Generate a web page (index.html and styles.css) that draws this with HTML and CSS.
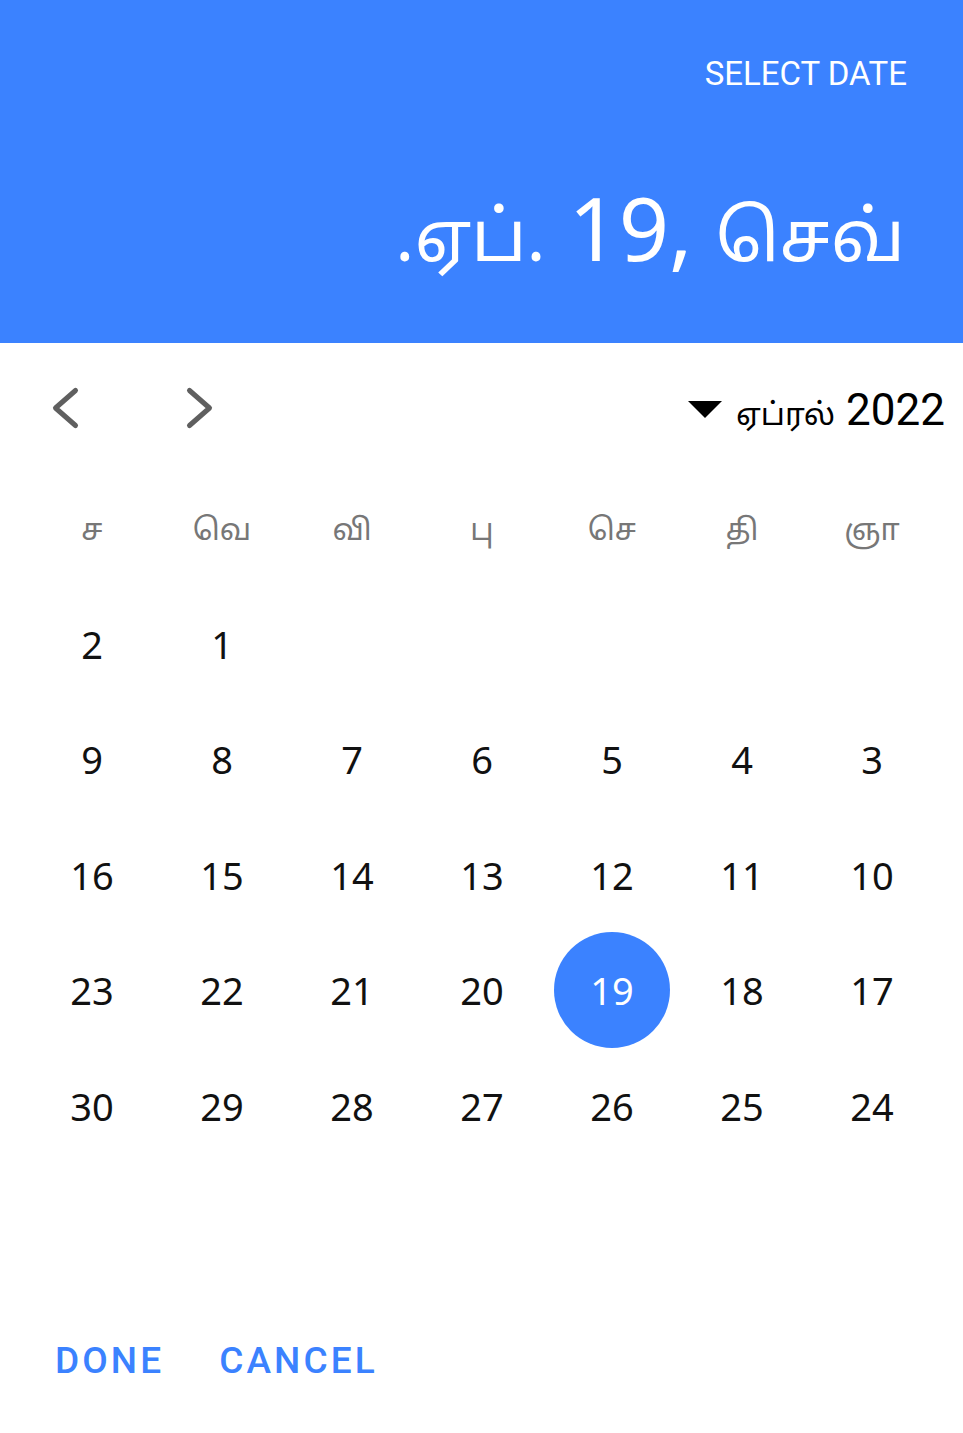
FILE: index.html
```html
<!DOCTYPE html>
<html lang="ta">
<head>
<meta charset="utf-8">
<title>Date picker</title>
<link rel="stylesheet" href="styles.css">
</head>
<body>
<div class="picker">
  <header class="head">
    <div class="head-label">SELECT DATE</div>
    <div class="head-date"><span class="ta">.ஏப்.</span> 19, <span class="ta">செவ்</span></div>
  </header>
  <div class="nav">
    <div class="arrows">
      <svg class="chev chev-prev" width="50" height="50" viewBox="0 0 50 50"><path d="M35.5 7.5 L15.5 25 L35.5 42.5" /></svg>
      <svg class="chev chev-next" width="50" height="50" viewBox="0 0 50 50"><path d="M19.5 7.5 L39.5 25 L19.5 42.5" /></svg>
    </div>
    <div class="month">
      <span class="tri"></span>
      <span class="month-text"><span class="month-ta">ஏப்ரல்</span> 2022</span>
    </div>
  </div>
  <div class="grid">
    <div class="dow">ஞா</div>
    <div class="dow">தி</div>
    <div class="dow">செ</div>
    <div class="dow">பு</div>
    <div class="dow">வி</div>
    <div class="dow">வெ</div>
    <div class="dow">ச</div>

    <div class="day"></div><div class="day"></div><div class="day"></div><div class="day"></div><div class="day"></div>
    <div class="day"><span>1</span></div><div class="day"><span>2</span></div>

    <div class="day"><span>3</span></div><div class="day"><span>4</span></div><div class="day"><span>5</span></div><div class="day"><span>6</span></div><div class="day"><span>7</span></div><div class="day"><span>8</span></div><div class="day"><span>9</span></div>

    <div class="day"><span>10</span></div><div class="day"><span>11</span></div><div class="day"><span>12</span></div><div class="day"><span>13</span></div><div class="day"><span>14</span></div><div class="day"><span>15</span></div><div class="day"><span>16</span></div>

    <div class="day"><span>17</span></div><div class="day"><span>18</span></div><div class="day selected"><span>19</span></div><div class="day"><span>20</span></div><div class="day"><span>21</span></div><div class="day"><span>22</span></div><div class="day"><span>23</span></div>

    <div class="day"><span>24</span></div><div class="day"><span>25</span></div><div class="day"><span>26</span></div><div class="day"><span>27</span></div><div class="day"><span>28</span></div><div class="day"><span>29</span></div><div class="day"><span>30</span></div>
  </div>
  <div class="actions">
    <button class="btn">DONE</button>
    <button class="btn">CANCEL</button>
  </div>
</div>
</body>
</html>
```
FILE: styles.css
```css
html, body {
  margin: 0;
  padding: 0;
  background: #ffffff;
}
body {
  width: 963px;
  font-family: "Noto Sans", "Noto Sans Tamil", "Lohit Tamil", sans-serif;
}
.picker {
  display: flex;
  flex-direction: column;
}
.head {
  height: 343px;
  box-sizing: border-box;
  background: #3b82ff;
  padding: 55px 56px 0 0;
  display: flex;
  flex-direction: column;
  align-items: flex-end;
  color: #ffffff;
}
.head-label {
  font-family: Roboto, "Noto Sans", sans-serif;
  font-size: 33px;
  line-height: 38px;
}
.head-date {
  margin-top: 88px;
  margin-right: 2px;
  font-size: 88px;
  line-height: 92px;
  white-space: nowrap;
}
.head-date .ta {
  font-size: 71px;
}
.nav {
  height: 130px;
  display: flex;
  align-items: center;
  justify-content: space-between;
  padding: 0 18px 0 40px;
}
.arrows {
  display: flex;
  gap: 80px;
}
.chev path {
  fill: none;
  stroke: #5f5f5f;
  stroke-width: 5;
  stroke-linecap: round;
  stroke-linejoin: round;
}
.month {
  display: flex;
  align-items: center;
  gap: 14px;
  color: #000000;
}
.tri {
  width: 0;
  height: 0;
  border-left: 17px solid transparent;
  border-right: 17px solid transparent;
  border-top: 17px solid #000000;
  margin-top: 2px;
}
.month-text {
  font-family: Roboto, "Noto Sans Tamil", "Noto Sans", sans-serif;
  font-size: 44px;
  line-height: 50px;
  padding-top: 8px;
}
.month-ta {
  font-size: 31px;
}
.grid {
  direction: rtl;
  display: grid;
  grid-template-columns: repeat(7, 130px);
  grid-template-rows: 113px;
  grid-auto-rows: 115.5px;
  margin-left: 27px;
  width: 910px;
}
.dow {
  display: flex;
  align-items: center;
  justify-content: center;
  color: #777777;
  font-size: 30px;
}
.day {
  display: flex;
  align-items: center;
  justify-content: center;
  font-size: 38px;
  color: #111111;
}
.day span {
  width: 116px;
  height: 116px;
  border-radius: 50%;
  display: flex;
  align-items: center;
  justify-content: center;
  direction: ltr;
}
.day.selected span {
  background: #3b82ff;
  color: #ffffff;
}
.actions {
  margin-top: 175px;
  display: flex;
  gap: 55px;
  padding-left: 55px;
}
.btn {
  font-family: Roboto, sans-serif;
  font-weight: 500;
  font-size: 37px;
  line-height: 44px;
  letter-spacing: 3.1px;
  color: #3b82ff;
  background: none;
  border: none;
  padding: 0;
  margin: 0;
}
```
